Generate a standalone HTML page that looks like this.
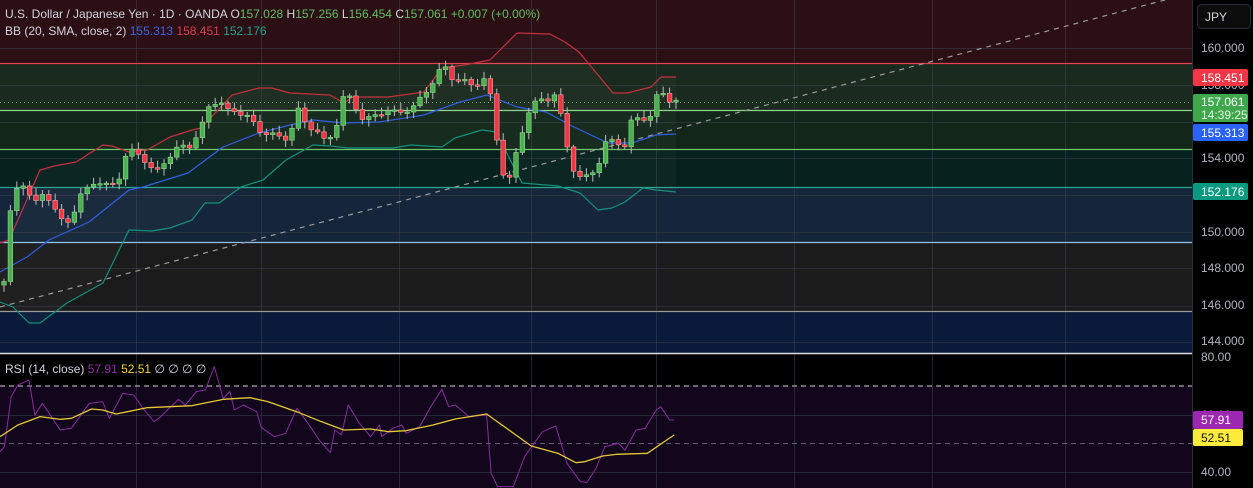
<!DOCTYPE html>
<html><head><meta charset="utf-8"><style>
html,body{margin:0;padding:0;background:#000;width:1253px;height:488px;overflow:hidden;font-family:"Liberation Sans",sans-serif}
svg{display:block}
</style></head><body>
<svg id="s" width="1253" height="488" xmlns="http://www.w3.org/2000/svg" font-family="Liberation Sans, sans-serif">
<rect x="0" y="0" width="1192" height="63" fill="#2b0f15"/>
<rect x="0" y="63" width="1192" height="47" fill="#1b2a1e"/>
<rect x="0" y="110" width="1192" height="39" fill="#13261a"/>
<rect x="0" y="149" width="1192" height="38" fill="#07221e"/>
<rect x="0" y="187" width="1192" height="55" fill="#16263a"/>
<rect x="0" y="242" width="1192" height="69" fill="#1b1b1c"/>
<rect x="0" y="311" width="1192" height="42" fill="#0a1a3a"/>
<rect x="0" y="353" width="1192" height="33" fill="#000"/>
<rect x="0" y="386" width="1192" height="102" fill="#12061d"/>
<g id="grid" stroke="#3a3f4a" stroke-opacity="0.55" stroke-width="1"></g>
<line x1="0" y1="63.5" x2="1192" y2="63.5" stroke="#e0444f" stroke-width="1.3"/>
<line x1="0" y1="110.5" x2="1192" y2="110.5" stroke="#8ed48a" stroke-width="1.3"/>
<line x1="0" y1="149.5" x2="1192" y2="149.5" stroke="#6cc46c" stroke-width="1.3"/>
<line x1="0" y1="187.5" x2="1192" y2="187.5" stroke="#2aa58f" stroke-width="1.3"/>
<line x1="0" y1="242.5" x2="1192" y2="242.5" stroke="#8fc2ee" stroke-width="1.3"/>
<line x1="0" y1="311.5" x2="1192" y2="311.5" stroke="#9a9a9a" stroke-width="1.3"/>
<line x1="0" y1="102.5" x2="1192" y2="102.5" stroke="#5fb35f" stroke-dasharray="1 3" stroke-width="1"/>
<line x1="0" y1="307" x2="1165" y2="0" stroke="#9a9a9a" stroke-dasharray="5 5" stroke-width="1.2"/>
<line x1="0" y1="353.5" x2="1253" y2="353.5" stroke="#ddd" stroke-width="1.5"/>
<line x1="0" y1="386" x2="1192" y2="386" stroke="#cfcfcf" stroke-dasharray="5 4" stroke-width="1"/>
<line x1="0" y1="443.5" x2="1192" y2="443.5" stroke="#6a5a78" stroke-dasharray="5 4" stroke-width="1"/>
<g id="bands"></g>
<g id="candles"></g>
<g id="rsi"></g>
<rect x="1192" y="0" width="61" height="488" fill="#000"/>
<line x1="1192.5" y1="0" x2="1192.5" y2="488" stroke="#2a2e39"/>
<rect x="1197.5" y="4.5" width="53" height="24" rx="4" fill="#0c0c0c" stroke="#2a2e39"/>
<text x="1205" y="21" fill="#d1d4dc" font-size="12">JPY</text>
<g fill="#b2b5be" font-size="12">
<text x="1201" y="52">160.000</text>
<text x="1201" y="89">158.000</text>
<text x="1201" y="162">154.000</text>
<text x="1201" y="236">150.000</text>
<text x="1201" y="272">148.000</text>
<text x="1201" y="309">146.000</text>
<text x="1201" y="345">144.000</text>
<text x="1201" y="361">80.00</text>
<text x="1201" y="419">60.00</text>
<text x="1201" y="476">40.00</text>
</g>
<rect x="1193" y="69" width="55" height="17" rx="2" fill="#f23645"/>
<text x="1201" y="82" fill="#fff" font-size="12">158.451</text>
<rect x="1193" y="94" width="55" height="28" rx="2" fill="#3fa84d"/>
<text x="1201" y="106" fill="#fff" font-size="12">157.061</text>
<text x="1201" y="119" fill="#e6f5e6" font-size="12">14:39:25</text>
<rect x="1193" y="124" width="55" height="17" rx="2" fill="#2962ff"/>
<text x="1201" y="137" fill="#fff" font-size="12">155.313</text>
<rect x="1193" y="183" width="55" height="17" rx="2" fill="#089981"/>
<text x="1201" y="196" fill="#fff" font-size="12">152.176</text>
<rect x="1193" y="411" width="50" height="18" rx="2" fill="#9c27b0"/>
<text x="1201" y="424" fill="#fff" font-size="12">57.91</text>
<rect x="1193" y="429" width="50" height="17" rx="2" fill="#ffeb3b"/>
<text x="1201" y="442" fill="#111" font-size="12">52.51</text>
<text x="5" y="18" font-size="12" fill="#d1d4dc">U.S. Dollar / Japanese Yen · 1D · OANDA <tspan>O</tspan><tspan fill="#5fbf5f">157.028</tspan> H<tspan fill="#5fbf5f">157.256</tspan> L<tspan fill="#5fbf5f">156.454</tspan> C<tspan fill="#5fbf5f">157.061</tspan> <tspan fill="#5fbf5f">+0.007 (+0.00%)</tspan></text>
<text x="5" y="35" font-size="12" fill="#d1d4dc">BB (20, SMA, close, 2) <tspan fill="#3d63e0">155.313</tspan> <tspan fill="#e03a4c">158.451</tspan> <tspan fill="#22a28c">152.176</tspan></text>
<text x="5" y="373" font-size="12" fill="#d1d4dc">RSI (14, close) <tspan fill="#8e2fa4">57.91</tspan> <tspan fill="#f0d640">52.51</tspan> <tspan fill="#d1d4dc">∅ ∅ ∅ ∅</tspan></text>
</svg>
<script>
var NS="http://www.w3.org/2000/svg";
function el(p,t,a){var e=document.createElementNS(NS,t);for(var k in a)e.setAttribute(k,a[k]);p.appendChild(e);return e;}
var g=document.getElementById('grid');
[136,261,399,531,656,794,932,1065].forEach(function(x){el(g,'line',{x1:x+.5,y1:0,x2:x+.5,y2:488});});
[48,85,122,158,195,232,268,306,342,415,472].forEach(function(y){el(g,'line',{x1:0,y1:y+.5,x2:1192,y2:y+.5});});
function pl(p,pts,c,w){el(p,'polyline',{points:pts.map(function(q){return q.join(',')}).join(' '),fill:'none',stroke:c,'stroke-width':w||1.2,'stroke-linejoin':'round'});}
var b=document.getElementById('bands');
var up=[[0,243],[9,240],[40,170],[54,166],[76,162],[103,145],[112,146],[129,152],[147,150],[170,137],[192,130],[201,128],[232,95],[259,88],[272,88],[290,93],[330,95],[344,103],[353,97],[388,97],[424,92],[442,68],[464,65],[490,60],[500,50],[517,33],[550,34],[565,42],[579,52],[613,93],[627,93],[651,87],[661,77],[676,77]];
var mid=[[0,272],[27,257],[49,240],[89,222],[129,190],[143,187],[188,173],[223,147],[259,133],[290,125],[313,120],[344,123],[379,122],[424,115],[460,102],[487,95],[517,107],[546,112],[574,127],[608,143],[632,143],[656,135],[676,134]];
var lo=[[0,302],[13,307],[29,323],[40,323],[67,303],[103,283],[129,230],[152,231],[170,228],[192,220],[205,203],[219,203],[241,187],[263,180],[286,160],[313,145],[330,146],[348,148],[393,148],[411,145],[442,147],[455,138],[482,130],[496,132],[522,183],[558,186],[580,193],[598,210],[612,208],[625,202],[643,188],[656,190],[676,192]];
el(b,'polygon',{points:up.concat(lo.slice().reverse()).map(function(q){return q.join(',')}).join(' '),fill:'#ffffff','fill-opacity':'0.025'});
pl(b,up,'#c4303f');pl(b,mid,'#2f5fe0');pl(b,lo,'#13907c');
var key=[[4,280],[10,215],[20,177],[35,205],[45,190],[55,210],[62,222],[70,220],[80,197],[95,180],[110,188],[120,175],[125,157],[135,150],[145,160],[155,175],[165,160],[180,147],[190,145],[200,132],[210,103],[220,100],[225,112],[235,110],[245,115],[260,130],[270,135],[285,138],[295,124],[300,105],[305,122],[315,130],[325,142],[335,130],[345,92],[355,104],[360,118],[368,120],[375,115],[385,110],[395,113],[405,110],[415,107],[425,92],[432,83],[444,65],[450,76],[460,80],[470,85],[480,82],[488,77],[494,126],[500,153],[506,190],[512,172],[517,150],[523,128],[530,108],[540,100],[548,98],[556,94],[562,122],[568,150],[575,173],[582,180],[590,175],[600,160],[606,143],[615,140],[625,146],[632,120],[640,117],[650,118],[657,97],[663,92],[670,100],[676,102]];
function interp(x){for(var i=0;i<key.length-1;i++){if(x<=key[i+1][0]){var a=key[i],c=key[i+1];return a[1]+(c[1]-a[1])*(x-a[0])/(c[0]-a[0]);}}return key[key.length-1][1];}
var cg=document.getElementById('candles');var prev=285;
for(var x=4;x<=677;x+=6.4){var c=interp(x)+Math.sin(x*1.7)*3;var o=prev;var hi=Math.min(o,c)-2-Math.abs(Math.sin(x*3.1))*5;var lw=Math.max(o,c)+2+Math.abs(Math.cos(x*2.3))*5;var up2=c<o;var col=up2?'#4caf50':'#f23645';var bc=up2?'#8fdc8f':'#f7a0a0';
el(cg,'line',{x1:x,y1:hi,x2:x,y2:lw,stroke:'#bbb','stroke-width':1});
var t=Math.min(o,c),h=Math.max(1.5,Math.abs(o-c));el(cg,'rect',{x:x-2.3,y:t,width:4.6,height:h,fill:col,stroke:bc,'stroke-width':0.6});prev=c;}
var r=document.getElementById('rsi');
function tr(a){return a.map(function(q){return [q[0]/2.24,q[1]/3+340];});}
var pr=[[0,335],[10,320],[25,170],[40,135],[65,120],[78,225],[95,190],[135,270],[160,265],[200,190],[230,185],[245,235],[275,160],[300,165],[320,205],[345,245],[360,230],[400,178],[415,195],[440,155],[460,150],[480,80],[500,175],[515,155],[525,210],[545,195],[575,215],[585,262],[615,290],[640,280],[665,205],[690,250],[715,300],[740,338],[750,270],[765,285],[780,195],[805,250],[830,290],[850,255],[855,290],[880,265],[900,255],[910,280],[940,260],[965,200],[990,148],[1005,200],[1020,195],[1050,230],[1090,225],[1100,400],[1115,440],[1150,440],[1175,350],[1215,275],[1245,258],[1270,370],[1300,425],[1315,427],[1335,385],[1355,320],[1385,310],[1400,330],[1425,270],[1445,265],[1470,210],[1480,200],[1500,240],[1510,240]];
var yr=[[0,290],[40,255],[90,230],[135,238],[160,235],[205,207],[230,210],[260,222],[330,203],[430,197],[500,178],[560,173],[600,185],[670,218],[720,245],[770,270],[830,267],[870,275],[910,272],[970,255],[1020,237],[1090,222],[1140,270],[1190,318],[1250,340],[1290,368],[1310,365],[1350,348],[1380,343],[1450,340],[1510,285]];
pl(r,tr(pr),'#8a2aa0',1);pl(r,tr(yr),'#e6c935',1.3);
</script>
</body></html>
